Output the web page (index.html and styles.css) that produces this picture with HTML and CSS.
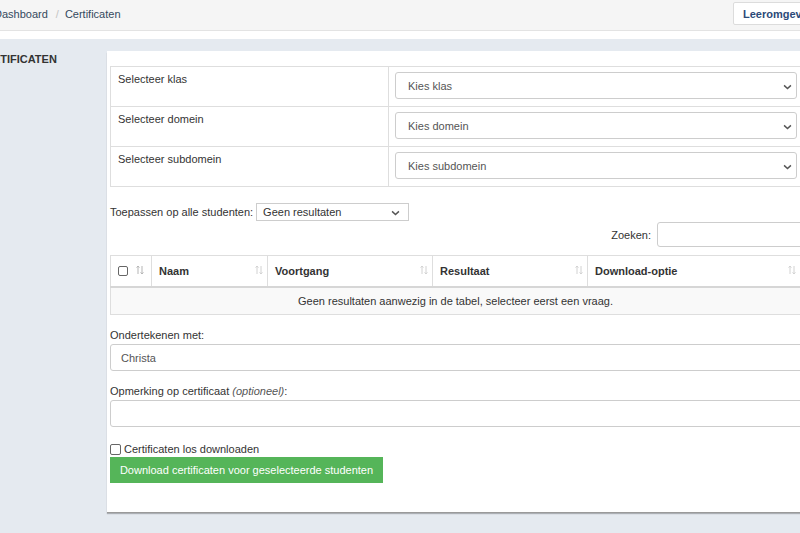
FILE: index.html
```html
<!DOCTYPE html>
<html lang="nl">
<head>
<meta charset="utf-8">
<title>Certificaten</title>
<link rel="stylesheet" href="styles.css">
</head>
<body>
<header class="topbar">
  <nav class="crumbs">
    <a class="crumb" href="#">Dashboard</a>
    <span class="sep">/</span>
    <span class="crumb">Certificaten</span>
  </nav>
  <button class="env-btn">Leeromgeving</button>
</header>
<div class="gap"></div>
<main class="main">
  <aside class="side">
    <h2 class="side-title">CERTIFICATEN</h2>
  </aside>
  <section class="card">
    <table class="sel-table">
      <tr>
        <td class="sel-label">Selecteer klas</td>
        <td class="sel-cell"><div class="select big"><span>Kies klas</span><svg class="chev" viewBox="0 0 10 6"><path d="M1.2 1.2 5 4.8 8.8 1.2"/></svg></div></td>
      </tr>
      <tr>
        <td class="sel-label">Selecteer domein</td>
        <td class="sel-cell"><div class="select big"><span>Kies domein</span><svg class="chev" viewBox="0 0 10 6"><path d="M1.2 1.2 5 4.8 8.8 1.2"/></svg></div></td>
      </tr>
      <tr>
        <td class="sel-label">Selecteer subdomein</td>
        <td class="sel-cell"><div class="select big"><span>Kies subdomein</span><svg class="chev" viewBox="0 0 10 6"><path d="M1.2 1.2 5 4.8 8.8 1.2"/></svg></div></td>
      </tr>
    </table>

    <div class="apply-row">
      <span>Toepassen op alle studenten:</span>
      <div class="select small"><span>Geen resultaten</span><svg class="chev" viewBox="0 0 10 6"><path d="M1.2 1.2 5 4.8 8.8 1.2"/></svg></div>
    </div>

    <div class="search-row">
      <span>Zoeken:</span>
      <div class="search-input"></div>
    </div>

    <table class="data-table">
      <thead>
        <tr>
          <th class="col-check"><span class="cb"></span><svg class="sort dark" viewBox="0 0 8 10"><path d="M2 9V1M0.6 2.6 2 1 3.4 2.6M6 1v8M4.6 7.4 6 9 7.4 7.4"/></svg></th>
          <th class="col-naam">Naam<svg class="sort" viewBox="0 0 8 10"><path d="M2 9V1M0.6 2.6 2 1 3.4 2.6M6 1v8M4.6 7.4 6 9 7.4 7.4"/></svg></th>
          <th class="col-voort">Voortgang<svg class="sort" viewBox="0 0 8 10"><path d="M2 9V1M0.6 2.6 2 1 3.4 2.6M6 1v8M4.6 7.4 6 9 7.4 7.4"/></svg></th>
          <th class="col-res">Resultaat<svg class="sort" viewBox="0 0 8 10"><path d="M2 9V1M0.6 2.6 2 1 3.4 2.6M6 1v8M4.6 7.4 6 9 7.4 7.4"/></svg></th>
          <th class="col-dl">Download-optie<svg class="sort" viewBox="0 0 8 10"><path d="M2 9V1M0.6 2.6 2 1 3.4 2.6M6 1v8M4.6 7.4 6 9 7.4 7.4"/></svg></th>
        </tr>
      </thead>
      <tbody>
        <tr><td colspan="5" class="empty">Geen resultaten aanwezig in de tabel, selecteer eerst een vraag.</td></tr>
      </tbody>
    </table>

    <label class="field-label first">Ondertekenen met:</label>
    <div class="text-input"><span>Christa</span></div>

    <label class="field-label">Opmerking op certificaat <em>(optioneel)</em>:</label>
    <div class="text-input"></div>

    <div class="check-row"><span class="cb"></span><span>Certificaten los downloaden</span></div>
    <button class="dl-btn">Download certificaten voor geselecteerde studenten</button>
  </section>
</main>
</body>
</html>
```

FILE: styles.css
```css
* { box-sizing: border-box; }
html, body {
  margin: 0;
  padding: 0;
  width: 800px;
  height: 533px;
  overflow: hidden;
  background: #e5eaf0;
  font-family: "Liberation Sans", Arial, sans-serif;
  font-size: 11px;
  color: #333;
}
.topbar {
  height: 31px;
  background: #f5f5f5;
  border-bottom: 1px solid #e3e3e3;
  display: flex;
  align-items: center;
  justify-content: space-between;
}
.crumbs {
  margin-left: -6px;
  display: flex;
  align-items: center;
  margin-top: -3px;
}
.crumb {
  color: #34495e;
  text-decoration: none;
}
.sep { color: #c4c4c4; margin: 0 6px 0 8px; }
.env-btn {
  margin-right: -40px;
  height: 23px;
  margin-top: -3px;
  padding: 0 9px;
  background: #fff;
  border: 1px solid #dcdcdc;
  border-radius: 2px;
  font-family: inherit;
  font-size: 11px;
  font-weight: bold;
  color: #2c4a78;
  width: 107px;
  text-align: left;
}
.gap {
  height: 8px;
  background: #fff;
}
.main {
  display: flex;
  align-items: flex-start;
}
.side {
  width: 107px;
  flex: none;
}
.side-title {
  margin: 14px 0 0 -23px;
  font-size: 11px;
  font-weight: bold;
  color: #333;
}
.card {
  flex: none;
  width: 705px;
  margin-top: 12px;
  background: #fff;
  padding: 15px 0 29px 3px;
  box-shadow: 0 1px 0 #9a9a9a, 0 2px 1px rgba(0,0,0,0.25);
}
.sel-table {
  width: 691px;
  border-collapse: collapse;
}
.sel-table td {
  border: 1px solid #dedede;
  height: 40px;
  vertical-align: top;
}
.sel-label {
  width: 278px;
  padding: 6px 6px 0 7px;
  color: #333;
  line-height: 13px;
}
.sel-cell {
  padding: 5px 3px 0 6px;
}
.select {
  position: relative;
  border: 1px solid #cdcdcd;
  background: #fff;
  display: flex;
  align-items: center;
  color: #555;
}
.select.big {
  height: 27px;
  border-radius: 3px;
  padding-left: 12px;
}
.select.small {
  width: 153px;
  height: 18px;
  border-radius: 0;
  padding-left: 6px;
  color: #333;
}
.chev {
  position: absolute;
  width: 9px;
  height: 6px;
  right: 4px;
  top: 50%;
  margin-top: -2px;
  fill: none;
  stroke: #555;
  stroke-width: 1.6;
}
.select.small .chev { right: 8px; }
.apply-row {
  display: flex;
  align-items: center;
  gap: 3px;
  margin-top: 16px;
  color: #333;
}
.search-row {
  display: flex;
  align-items: center;
  justify-content: flex-end;
  gap: 6px;
  margin-top: 1px;
  width: 693px;
  color: #333;
}
.search-input {
  width: 146px;
  height: 25px;
  border: 1px solid #cdcdcd;
  border-radius: 3px;
  background: #fff;
}
.data-table {
  width: 691px;
  border-collapse: collapse;
  margin-top: 8px;
}
.data-table th {
  position: relative;
  height: 31px;
  border: 1px solid #dedede;
  border-bottom: 2px solid #d6d6d6;
  text-align: left;
  font-weight: bold;
  color: #333;
  padding: 0 0 0 7px;
}
.col-check { width: 41px; }
.col-naam { width: 116px; }
.col-voort { width: 165px; }
.col-res { width: 155px; }
.sort {
  position: absolute;
  right: 4px;
  top: 9px;
  width: 8px;
  height: 10px;
  fill: none;
  stroke: #d2d2d2;
  stroke-width: 1;
}
.sort.dark { right: auto; left: 25px; stroke: #b5b5b5; }
.cb {
  display: inline-block;
  width: 10px;
  height: 10px;
  border: 1px solid #666;
  border-radius: 2px;
  background: #fff;
  vertical-align: middle;
}
.col-check .cb { margin-top: -2px; }
.empty {
  height: 28px;
  background: #f9f9f9;
  border: 1px solid #dedede;
  text-align: center;
  color: #333;
}
.field-label {
  display: block;
  color: #333;
  margin-top: 14px;
  line-height: 13px;
}
.field-label em { color: #555; }
.text-input {
  width: 695px;
  height: 27px;
  margin-top: 2px;
  border: 1px solid #cdcdcd;
  border-radius: 3px;
  display: flex;
  align-items: center;
  padding-left: 10px;
  color: #555;
}
.check-row {
  display: flex;
  align-items: center;
  gap: 3px;
  margin-top: 16px;
  color: #333;
  line-height: 13px;
}
.check-row .cb { width: 11px; height: 11px; }
.dl-btn {
  display: block;
  margin-top: 1px;
  width: 273px;
  height: 26px;
  background: #55b559;
  border: none;
  border-radius: 0;
  color: #fff;
  font-family: inherit;
  font-size: 11px;
  padding: 0;
}
```
